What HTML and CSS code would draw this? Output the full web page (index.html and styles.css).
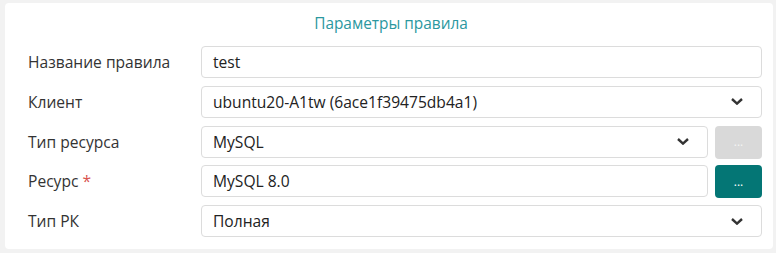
FILE: index.html
```html
<!DOCTYPE html>
<html lang="ru">
<head>
<meta charset="utf-8">
<link rel="stylesheet" href="styles.css">
</head>
<body>
<section class="card">
  <h2 class="title">Параметры правила</h2>
  <div class="rows">
    <div class="row">
      <label class="label">Название правила</label>
      <div class="field"><span class="value">test</span></div>
    </div>
    <div class="row">
      <label class="label">Клиент</label>
      <div class="field select"><span class="value">ubuntu20-A1tw (6ace1f39475db4a1)</span>
        <svg class="chev" viewBox="0 0 12 7"><path d="M1 1l5 4.6L11 1"/></svg></div>
    </div>
    <div class="row">
      <label class="label">Тип ресурса</label>
      <div class="group">
        <div class="field select"><span class="value">MySQL</span>
          <svg class="chev" viewBox="0 0 12 7"><path d="M1 1l5 4.6L11 1"/></svg></div>
        <button class="btn disabled">...</button>
      </div>
    </div>
    <div class="row">
      <label class="label">Ресурс <span class="req">*</span></label>
      <div class="group">
        <div class="field"><span class="value">MySQL 8.0</span></div>
        <button class="btn primary">...</button>
      </div>
    </div>
    <div class="row">
      <label class="label">Тип РК</label>
      <div class="field select"><span class="value">Полная</span>
        <svg class="chev" viewBox="0 0 12 7"><path d="M1 1l5 4.6L11 1"/></svg></div>
    </div>
  </div>
</section>
</body>
</html>
```
FILE: styles.css
```css
* { box-sizing: border-box; }
html, body { margin: 0; }
body {
  background: #f2f2f2;
  padding: 3px 3px 4px 5px;
  font-family: "Open Sans", "Noto Sans", sans-serif;
  font-size: 15.6px;
  color: #333;
}
.card {
  background: #fff;
  border-radius: 4px;
  padding: 9px 11px 12px 23px;
  height: 246px;
}
.title {
  margin: 0;
  text-align: center;
  font-size: 15.4px;
  font-weight: 400;
  color: #2b98a0;
  line-height: 20px;
  height: 34px;
  padding-top: 2px;
  padding-right: 8px;
}
.rows {
  display: flex;
  flex-direction: column;
  gap: 7.75px;
}
.row {
  display: flex;
  align-items: center;
  height: 32px;
}
.label {
  width: 173px;
  flex: none;
  color: #333;
}
.req { color: #d9534f; }
.field {
  flex: 1;
  height: 32px;
  border: 1px solid #dcdcdc;
  border-radius: 4px;
  display: flex;
  align-items: center;
  padding: 0 11px;
  color: #222;
}
.value { flex: 1; }
.chev {
  width: 12px;
  height: 7px;
  margin-right: 7px;
  fill: none;
  stroke: #333;
  stroke-width: 2.4;
}
.group {
  flex: 1;
  display: flex;
  gap: 7px;
  height: 32px;
}
.btn {
  width: 47px;
  flex: none;
  height: 33px;
  border: none;
  border-radius: 4px;
  color: #fff;
  font-family: inherit;
  font-size: 12px;
  padding: 0;
  line-height: 1;
}
.btn.disabled { background: #d9d9d9; color: #f4f4f4; }
.btn.primary { background: #047675; }
```
